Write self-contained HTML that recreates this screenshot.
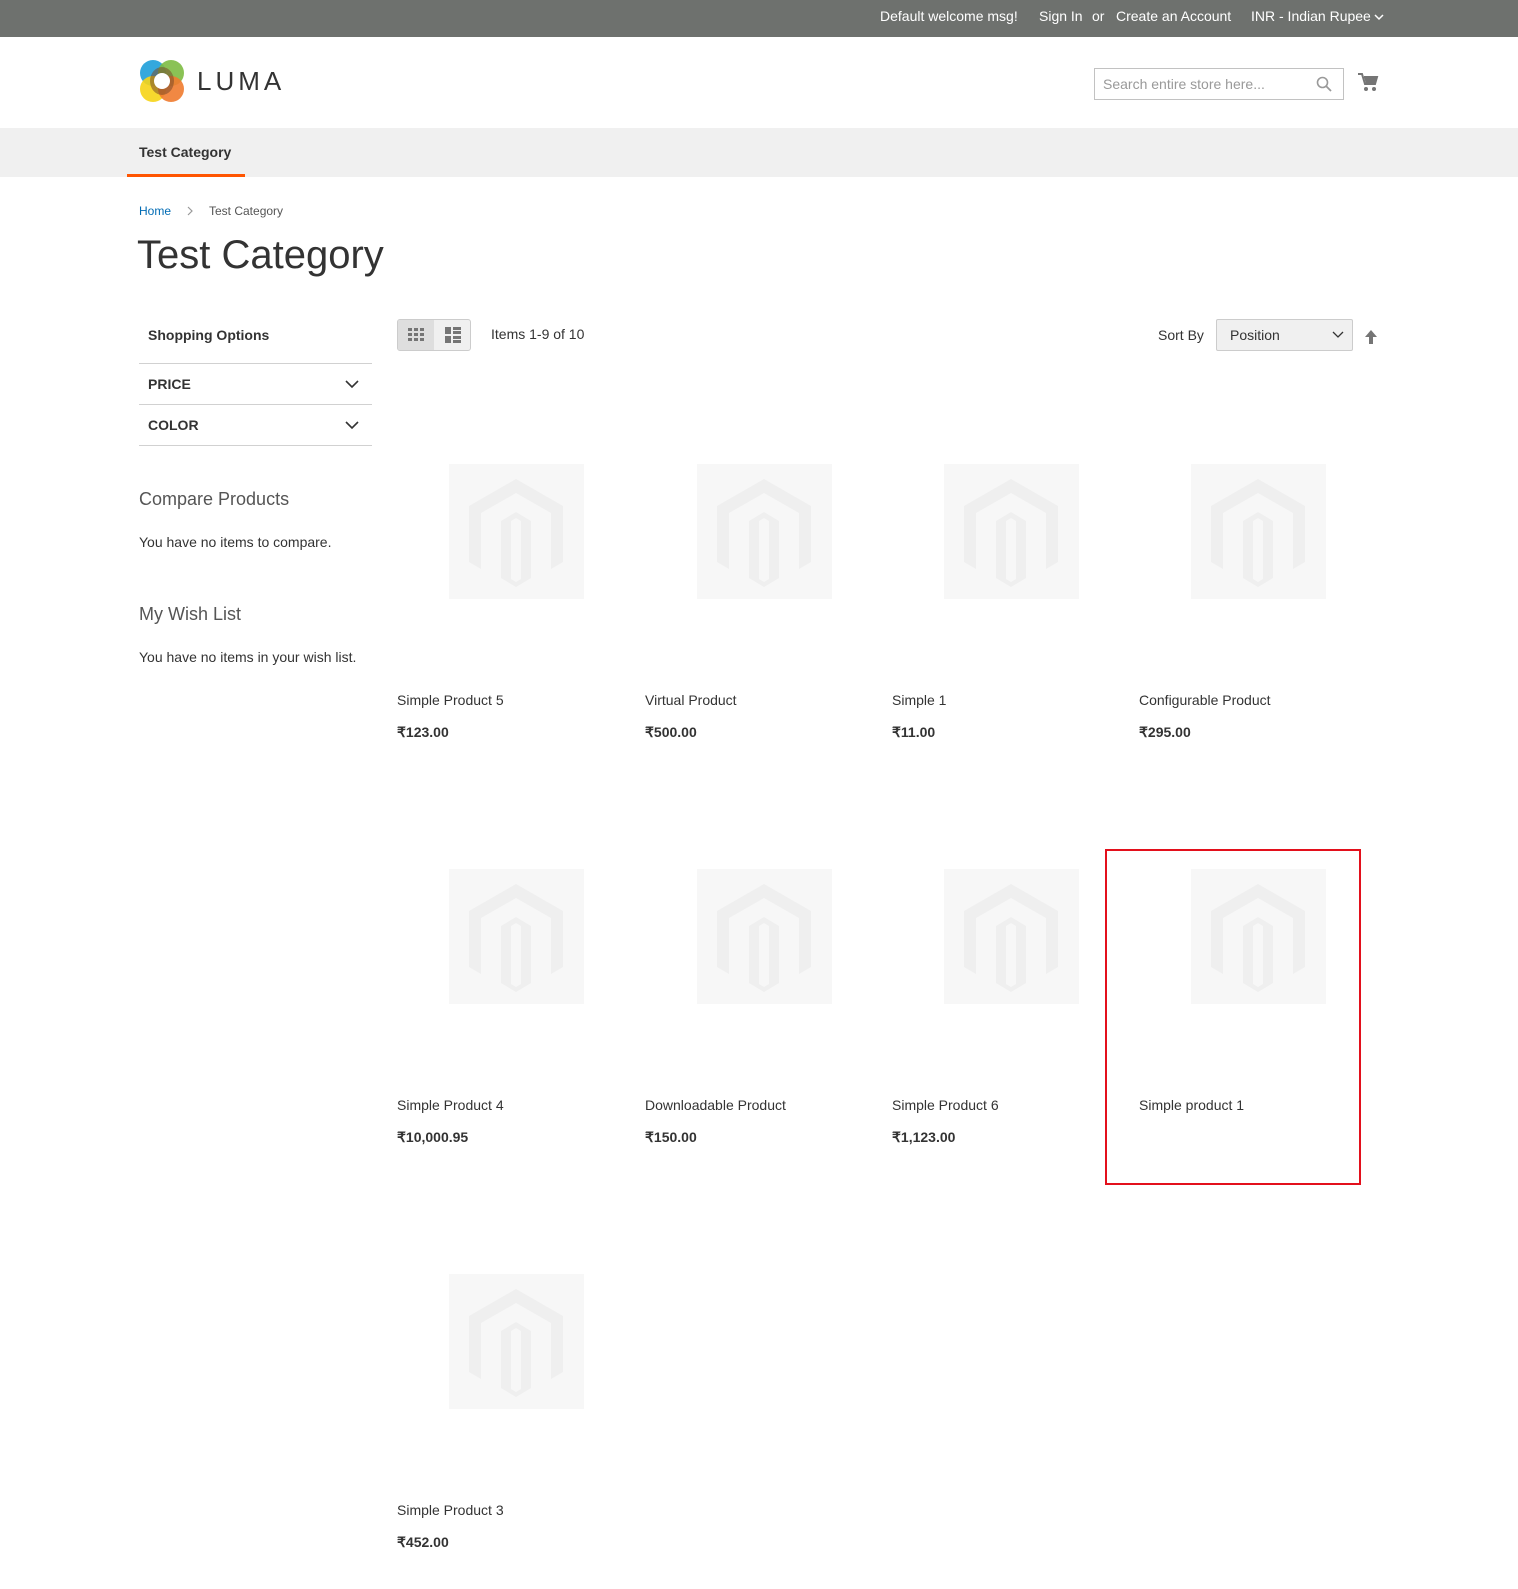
<!DOCTYPE html>
<html><head><meta charset="utf-8"><style>
*{margin:0;padding:0;box-sizing:border-box}
body{width:1518px;height:1589px;background:#fff;font-family:"Liberation Sans",sans-serif;color:#333;position:relative;overflow:hidden}
.a{position:absolute;white-space:nowrap}
.top{left:0;top:0;width:1518px;height:37px;background:#6e716e}
.top span{color:#fff;font-size:14px;top:9px}
.nav{left:0;top:128px;width:1518px;height:49px;background:#f0f0f0}
.ph{width:135px;height:135px;background:#f7f7f7}
.pn{font-size:14px;color:#333}
.pp{font-size:14px;font-weight:bold;color:#333}
.line{height:1px;background:#d1d1d1;width:233px;left:139px}
</style></head><body>
<div class="a top"></div>
<span class="a" style="left:880px;top:8px;color:#fff;font-size:14px">Default welcome msg!</span>
<span class="a" style="left:1039px;top:8px;color:#fff;font-size:14px">Sign In</span>
<span class="a" style="left:1092px;top:8px;color:#fff;font-size:14px">or</span>
<span class="a" style="left:1116px;top:8px;color:#fff;font-size:14px">Create an Account</span>
<span class="a" style="left:1251px;top:8px;color:#fff;font-size:14px">INR - Indian Rupee</span>
<svg class="a" style="left:1373px;top:12px" width="12" height="10"><path d="M2 3l4 4 4-4" stroke="#fff" stroke-width="1.5" fill="none"/></svg>

<svg class="a" style="left:139px;top:59px" width="46" height="44" viewBox="0 0 46 44">
<circle cx="14" cy="14" r="13" fill="#1e9fd9" opacity=".9"/>
<circle cx="32" cy="14" r="13" fill="#7dbb42" opacity=".9"/>
<circle cx="14" cy="30" r="13" fill="#f6d417" opacity=".9"/>
<circle cx="32" cy="30" r="13" fill="#f07b2f" opacity=".9"/>
<ellipse cx="23" cy="22" rx="12" ry="14" fill="#7a4a2a" opacity=".55"/>
<circle cx="23" cy="22" r="8" fill="#fff"/>
</svg>
<span class="a" style="left:197px;top:66px;font-size:26px;letter-spacing:4px;color:#333">LUMA</span>
<div class="a" style="left:1094px;top:68px;width:250px;height:32px;border:1px solid #c2c2c2"></div>
<span class="a" style="left:1103px;top:76px;font-size:14px;color:#999">Search entire store here...</span>
<svg class="a" style="left:1316px;top:76px" width="16" height="16"><circle cx="6.5" cy="6.5" r="5" stroke="#999" stroke-width="1.6" fill="none"/><path d="M10 10l5 5" stroke="#999" stroke-width="1.8"/></svg>
<svg class="a" style="left:1357px;top:72px" width="22" height="20" viewBox="0 0 22 20"><path d="M1 2h4l3 10h10l2-7H7" stroke="#757575" stroke-width="2" fill="none"/><path d="M7 5h13l-2 7H9z" fill="#757575"/><circle cx="9" cy="17" r="2" fill="#757575"/><circle cx="17" cy="17" r="2" fill="#757575"/></svg>

<div class="a nav"></div>
<span class="a" style="left:139px;top:144px;font-size:14px;font-weight:bold">Test Category</span>
<div class="a" style="left:127px;top:174px;width:118px;height:3px;background:#ff5501"></div>

<span class="a" style="left:139px;top:204px;font-size:12px;color:#006bb4">Home</span>
<svg class="a" style="left:186px;top:206px" width="8" height="10"><path d="M2 1l4 4-4 4" stroke="#999" stroke-width="1.2" fill="none"/></svg>
<span class="a" style="left:209px;top:204px;font-size:12px;color:#555">Test Category</span>
<span class="a" style="left:137px;top:233px;font-size:40px;font-weight:300;color:#333">Test Category</span>

<span class="a" style="left:148px;top:327px;font-size:14px;font-weight:bold">Shopping Options</span>
<div class="a line" style="top:363px"></div>
<span class="a" style="left:148px;top:376px;font-size:14px;font-weight:bold">PRICE</span>
<svg class="a" style="left:345px;top:379px" width="14" height="10"><path d="M1 2l6 6 6-6" stroke="#333" stroke-width="1.6" fill="none"/></svg>
<div class="a line" style="top:404px"></div>
<span class="a" style="left:148px;top:417px;font-size:14px;font-weight:bold">COLOR</span>
<svg class="a" style="left:345px;top:420px" width="14" height="10"><path d="M1 2l6 6 6-6" stroke="#333" stroke-width="1.6" fill="none"/></svg>
<div class="a line" style="top:445px"></div>
<span class="a" style="left:139px;top:489px;font-size:18px;font-weight:300;color:#555">Compare Products</span>
<span class="a" style="left:139px;top:534px;font-size:14px">You have no items to compare.</span>
<span class="a" style="left:139px;top:604px;font-size:18px;font-weight:300;color:#555">My Wish List</span>
<span class="a" style="left:139px;top:649px;font-size:14px">You have no items in your wish list.</span>

<div class="a" style="left:397px;top:319px;width:74px;height:32px;border:1px solid #ccc;border-radius:3px;background:#f0f0f0;overflow:hidden"><div style="width:36px;height:32px;background:#dedede"></div></div>
<svg class="a" style="left:408px;top:328px" width="16" height="14"><g fill="#757575"><rect x="0" y="0" width="4" height="3"/><rect x="6" y="0" width="4" height="3"/><rect x="12" y="0" width="4" height="3"/><rect x="0" y="5" width="4" height="3"/><rect x="6" y="5" width="4" height="3"/><rect x="12" y="5" width="4" height="3"/><rect x="0" y="10" width="4" height="3"/><rect x="6" y="10" width="4" height="3"/><rect x="12" y="10" width="4" height="3"/></g></svg>
<svg class="a" style="left:445px;top:327px" width="16" height="16"><g fill="#757575"><rect x="0" y="0" width="6" height="7"/><rect x="8" y="0" width="8" height="3"/><rect x="8" y="4" width="8" height="3"/><rect x="0" y="9" width="6" height="7"/><rect x="8" y="9" width="8" height="3"/><rect x="8" y="13" width="8" height="3"/></g></svg>
<span class="a" style="left:491px;top:326px;font-size:14px">Items 1-9 of 10</span>
<span class="a" style="left:1158px;top:327px;font-size:14px">Sort By</span>
<div class="a" style="left:1216px;top:319px;width:137px;height:32px;border:1px solid #ccc;border-radius:2px;background:#f0f0f0"></div>
<span class="a" style="left:1230px;top:327px;font-size:14px">Position</span>
<svg class="a" style="left:1332px;top:331px" width="12" height="8"><path d="M1 1l5 5 5-5" stroke="#333" stroke-width="1.3" fill="none"/></svg>
<svg class="a" style="left:1364px;top:330px" width="14" height="14"><path d="M7 0l6 7H9v7H5V7H1z" fill="#757575"/></svg>

<svg width="0" height="0" style="position:absolute"><defs><symbol id="m" viewBox="0 0 135 135"><path d="M67 15l47 27v56l-12 7V49L67 29 32 49v56l-12-7V42z" fill="#efefef"/><path d="M52 57l15-9 15 9v57l-15 9-15-9zM62 57v58l5 3 5-3V57l-5-3z" fill="#efefef"/></symbol></defs></svg>

<div class="a ph" style="left:449px;top:464px"><svg width="135" height="135"><use href="#m"/></svg></div>
<div class="a ph" style="left:697px;top:464px"><svg width="135" height="135"><use href="#m"/></svg></div>
<div class="a ph" style="left:944px;top:464px"><svg width="135" height="135"><use href="#m"/></svg></div>
<div class="a ph" style="left:1191px;top:464px"><svg width="135" height="135"><use href="#m"/></svg></div>
<span class="a pn" style="left:397px;top:692px">Simple Product 5</span>
<span class="a pn" style="left:645px;top:692px">Virtual Product</span>
<span class="a pn" style="left:892px;top:692px">Simple 1</span>
<span class="a pn" style="left:1139px;top:692px">Configurable Product</span>
<span class="a pp" style="left:397px;top:724px">₹123.00</span>
<span class="a pp" style="left:645px;top:724px">₹500.00</span>
<span class="a pp" style="left:892px;top:724px">₹11.00</span>
<span class="a pp" style="left:1139px;top:724px">₹295.00</span>

<div class="a ph" style="left:449px;top:869px"><svg width="135" height="135"><use href="#m"/></svg></div>
<div class="a ph" style="left:697px;top:869px"><svg width="135" height="135"><use href="#m"/></svg></div>
<div class="a ph" style="left:944px;top:869px"><svg width="135" height="135"><use href="#m"/></svg></div>
<div class="a ph" style="left:1191px;top:869px"><svg width="135" height="135"><use href="#m"/></svg></div>
<span class="a pn" style="left:397px;top:1097px">Simple Product 4</span>
<span class="a pn" style="left:645px;top:1097px">Downloadable Product</span>
<span class="a pn" style="left:892px;top:1097px">Simple Product 6</span>
<span class="a pn" style="left:1139px;top:1097px">Simple product 1</span>
<span class="a pp" style="left:397px;top:1129px">₹10,000.95</span>
<span class="a pp" style="left:645px;top:1129px">₹150.00</span>
<span class="a pp" style="left:892px;top:1129px">₹1,123.00</span>
<div class="a" style="left:1105px;top:849px;width:256px;height:336px;border:2px solid #e3101c"></div>

<div class="a ph" style="left:449px;top:1274px"><svg width="135" height="135"><use href="#m"/></svg></div>
<span class="a pn" style="left:397px;top:1502px">Simple Product 3</span>
<span class="a pp" style="left:397px;top:1534px">₹452.00</span>
</body></html>
